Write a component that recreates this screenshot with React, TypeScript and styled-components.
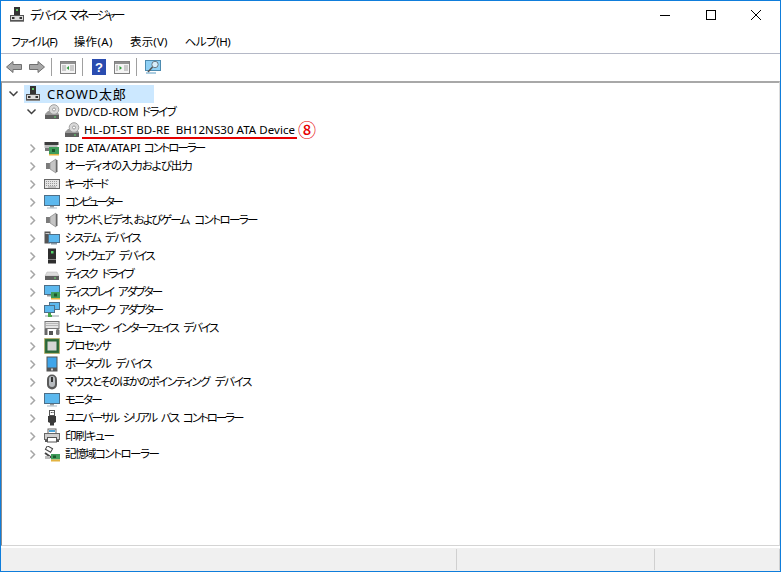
import React from "react";
import styled, { createGlobalStyle } from "styled-components";

const GlobalStyle = createGlobalStyle`
	html, body { margin: 0; padding: 0; background: #fff; }
	body {
		font-family: "Noto Sans", "Noto Sans CJK JP", sans-serif;
		font-size: 12px;
		color: #000;
		font-feature-settings: "palt" 1;
	}
`;

const Win = styled.div`
	width: 781px;
	height: 572px;
	box-sizing: border-box;
	border: 1px solid #0f7ddb;
	display: flex;
	flex-direction: column;
	overflow: hidden;
`;

const TitleBar = styled.div`
	height: 29px;
	display: flex;
	align-items: center;
	flex-shrink: 0;
	padding-right: 1px;
	margin-top: -1px;
`;

const TitleIcon = styled.div`
	width: 16px;
	height: 16px;
	margin-left: 8px;
	margin-right: 5px;
`;

const TitleText = styled.span`
	font-size: 12px;
	flex: 1;
	letter-spacing: -2.1px;
	word-spacing: 3px;
`;

const WinButton = styled.div`
	width: 45.5px;
	height: 29px;
	display: flex;
	align-items: center;
	justify-content: center;
`;

const MenuBar = styled.div`
	height: 25px;
	box-sizing: border-box;
	display: flex;
	align-items: center;
	gap: 17px;
	padding: 0 0 1px 10px;
	border-bottom: 1px solid #b4b8c6;
	flex-shrink: 0;
`;

const MenuItem = styled.span<{ $track: number }>`
	font-size: 11.5px;
	letter-spacing: ${(p) => p.$track}px;
`;

const ToolBar = styled.div`
	height: 27px;
	display: flex;
	align-items: center;
	padding-left: 4px;
	flex-shrink: 0;
	box-sizing: border-box;
	padding-bottom: 1px;
`;

const ToolIcon = styled.div`
	width: 18px;
	height: 18px;
	margin-right: 5px;
	display: flex;
	align-items: center;
	justify-content: center;
`;

const ToolSep = styled.div`
	width: 1px;
	height: 18px;
	background: #a0a0a0;
	margin-right: 7px;
`;

const TreePane = styled.div`
	flex: 1;
	border-top: 2px solid #a8a8a8;
	border-left: 1px solid #8c8c8c;
	border-right: 1px solid #dcdcdc;
	border-bottom: 1px solid #d4d4d4;
	padding-top: 2px;
	background: #fff;
`;

const Row = styled.div<{ $pad: number }>`
	height: 18px;
	display: flex;
	align-items: center;
	padding-left: ${(p) => p.$pad}px;
`;

const Arrow = styled.div`
	width: 15px;
	height: 18px;
	display: flex;
	align-items: center;
	justify-content: center;
	margin-right: 5px;
`;

const RootArrow = styled(Arrow)`
	margin-right: 3px;
`;

const ItemIcon = styled.div`
	width: 16px;
	height: 16px;
	margin-right: 5px;
	flex-shrink: 0;
`;

const Label = styled.span`
	font-size: 11.5px;
	white-space: pre;
	line-height: 18px;
`;

const Kana = styled.span<{ $track: number }>`
	letter-spacing: ${(p) => p.$track}px;
	word-spacing: 4px;
`;

const RootHighlight = styled.div`
	display: flex;
	align-items: center;
	background: #cce8ff;
	height: 18px;
	width: 130px;
	padding-left: 1px;
	box-sizing: border-box;
`;

const RootLabel = styled.span`
	font-size: 13px;
	line-height: 18px;
	letter-spacing: 0.8px;
	margin-left: 1px;
	white-space: nowrap;
`;

const DeviceWrap = styled.span`
	position: relative;
	display: inline-block;
	margin-left: -1px;
	height: 18px;
	letter-spacing: 0.06px;
`;

const Underline = styled.div`
	position: absolute;
	left: -2px;
	top: 16px;
	width: 215px;
	height: 2px;
	background: #e60000;
`;

const Badge = styled.span`
	position: absolute;
	left: 214px;
	top: -1px;
	font-size: 18px;
	line-height: 18px;
	color: #e60000;
	font-weight: 500;
	font-family: "Noto Sans CJK JP", sans-serif;
`;

const StatusBar = styled.div`
	height: 23px;
	display: flex;
	background: #f0f0f0;
	flex-shrink: 0;
	margin-top: 2px;
`;

const StatusCell = styled.div<{ $w?: number }>`
	width: ${(p) => (p.$w ? `${p.$w}px` : "auto")};
	flex: ${(p) => (p.$w ? "none" : 1)};
	box-sizing: border-box;
	border-right: 1px solid #d0d0d0;
	margin: 1px 0;
`;

const Svg = ({ children, s = 16 }: { children: React.ReactNode; s?: number }) => (
	<svg width={s} height={s} viewBox="0 0 16 16" style={{ display: "block" }}>
		{children}
	</svg>
);

const IcComputerRoot = () => (
	<Svg>
		<rect x="5" y="0" width="6" height="9" fill="#333" />
		<rect x="7" y="2" width="2" height="2" fill="#5fc35f" />
		<rect x="1.5" y="8.5" width="13" height="5" fill="#dcdcdc" stroke="#555" />
		<rect x="3" y="10" width="2.5" height="2" fill="#333" />
		<rect x="10.5" y="10" width="2.5" height="2" fill="#333" />
		<rect x="1" y="14" width="14" height="1" fill="#8c8c8c" />
	</Svg>
);
const IcDisc = () => (
	<Svg>
		<path d="M1 10 L4 7 H12 L15 10 V15 H1Z" fill="#9a9a9a" />
		<rect x="1" y="11" width="14" height="4" fill="#5f5f5f" />
		<circle cx="10" cy="5.5" r="4.8" fill="#d8d8d8" stroke="#a0a0a0" />
		<circle cx="10" cy="5.5" r="1.5" fill="#fff" stroke="#808080" strokeWidth="0.7" />
		<rect x="10" y="12.5" width="2" height="1" fill="#62e070" />
	</Svg>
);
const IcIde = () => (
	<Svg>
		<rect x="0.5" y="2" width="14" height="3" fill="#3c3c3c" />
		<rect x="0.5" y="5" width="13" height="3" fill="#bcbcbc" />
		<rect x="1" y="8" width="5" height="3" fill="#777" />
		<rect x="5" y="7" width="10" height="7" fill="#3f9c5a" />
		<rect x="8" y="9" width="3" height="3" fill="#1d5a2e" />
		<rect x="5" y="14" width="10" height="1.5" fill="#e3b341" />
	</Svg>
);
const IcSpeaker = () => (
	<Svg>
		<rect x="2" y="5" width="5" height="6" fill="#7b7b7b" />
		<path d="M6 5 L12 1 V15 L6 11Z" fill="#c4c4c4" stroke="#8e8e8e" strokeWidth="0.8" />
		<rect x="12" y="2" width="1.5" height="12" fill="#666" />
	</Svg>
);
const IcKeyboard = () => (
	<Svg>
		<rect x="0.5" y="3.5" width="15" height="9" fill="#e4e4e4" stroke="#666" />
		<path d="M2 5.5 H14 M2 7.5 H14 M2 9.5 H14" stroke="#9a9a9a" strokeDasharray="1 1" />
		<rect x="4" y="10.5" width="8" height="1" fill="#9a9a9a" />
	</Svg>
);
const IcMonitor = () => (
	<Svg>
		<rect x="0.5" y="1.5" width="15" height="10" fill="#5cb8ee" stroke="#4d6f88" />
		<rect x="6" y="12" width="4" height="1.5" fill="#9a9a9a" />
		<rect x="3" y="13.5" width="10" height="1" fill="#a8b8c4" />
	</Svg>
);
const IcSystem = () => (
	<Svg>
		<rect x="0.5" y="1.5" width="6" height="12" fill="#555" />
		<rect x="1.5" y="3" width="4" height="1" fill="#ccc" />
		<rect x="4.5" y="4.5" width="11" height="8" fill="#5cb8ee" stroke="#4d6f88" />
		<rect x="7" y="13" width="6" height="1.5" fill="#8a98a4" />
	</Svg>
);
const IcSoftware = () => (
	<Svg>
		<rect x="4" y="0.5" width="8" height="15" fill="#2e2e2e" />
		<rect x="7" y="3" width="2.5" height="2.5" fill="#54d26a" />
		<rect x="4" y="11" width="8" height="1" fill="#888" />
	</Svg>
);
const IcDrive = () => (
	<Svg>
		<path d="M3 6 H13 L15 10 H1Z" fill="#dcdcdc" stroke="#b0b0b0" strokeWidth="0.5" />
		<rect x="1" y="10" width="14" height="4" fill="#5f5f5f" />
		<rect x="10" y="11.5" width="2" height="1" fill="#73e273" />
	</Svg>
);
const IcDisplay = () => (
	<Svg>
		<rect x="0.5" y="1.5" width="15" height="9" fill="#5cb8ee" stroke="#4d6f88" />
		<rect x="3" y="11" width="6" height="1.5" fill="#9a9a9a" />
		<rect x="7" y="8" width="9" height="6" fill="#3f9c5a" />
		<rect x="10" y="9.5" width="3" height="3" fill="#1d5a2e" />
		<rect x="7" y="14" width="9" height="1.5" fill="#e3b341" />
	</Svg>
);
const IcNetwork = () => (
	<Svg>
		<rect x="5.5" y="0.5" width="10" height="7" fill="#5cb8ee" stroke="#4d6f88" />
		<rect x="0.5" y="3.5" width="10" height="7" fill="#5cb8ee" stroke="#4d6f88" />
		<rect x="4" y="11" width="3" height="2" fill="#4aa54a" />
		<rect x="1" y="13" width="14" height="2" fill="#c9cdd0" />
		<rect x="4" y="13" width="4" height="2" fill="#4aa54a" />
	</Svg>
);
const IcHid = () => (
	<Svg>
		<rect x="1" y="1.5" width="14" height="7" fill="#e4e4e4" stroke="#777" />
		<path d="M2.5 3.5 H13.5 M2.5 5.5 H13.5" stroke="#888" strokeDasharray="1 1" />
		<rect x="0.5" y="9" width="3" height="6" fill="#666" />
		<rect x="12" y="9" width="3.5" height="6" rx="1.5" fill="#777" />
		<path d="M5 15 V11 H9 V15Z" fill="#555" />
	</Svg>
);
const IcCpu = () => (
	<Svg>
		<rect x="0.5" y="0.5" width="15" height="15" fill="#3d7a45" stroke="#c8a74a" strokeDasharray="1 1" />
		<rect x="1.5" y="1.5" width="13" height="13" fill="#2a6637" />
		<rect x="3.5" y="3.5" width="9" height="9" fill="#d6d6d6" />
	</Svg>
);
const IcPortable = () => (
	<Svg>
		<rect x="2.5" y="0.5" width="11" height="15" fill="#555" />
		<rect x="3.5" y="1.5" width="9" height="10" fill="#3fa5ea" />
		<rect x="7" y="12.5" width="2" height="2" fill="#ccc" />
	</Svg>
);
const IcMouse = () => (
	<Svg>
		<rect x="3" y="0.5" width="10" height="15" rx="5" fill="#5a5a5a" />
		<rect x="5" y="2" width="6" height="11" rx="3" fill="#b8bcc0" />
		<rect x="7" y="3" width="2" height="5" fill="#333" />
	</Svg>
);
const IcUsb = () => (
	<Svg>
		<rect x="5.5" y="0.5" width="5" height="5" fill="#fff" stroke="#555" />
		<rect x="6.8" y="2" width="1" height="1" fill="#333" />
		<rect x="8.5" y="2" width="1" height="1" fill="#333" />
		<path d="M4 6 H12 V12 L10 13 V15.5 H6 V13 L4 12Z" fill="#3a3a3a" />
	</Svg>
);
const IcPrinter = () => (
	<Svg>
		<rect x="4" y="1" width="8" height="5" fill="#fff" stroke="#666" />
		<rect x="0.5" y="5.5" width="15" height="6" fill="#cfcfcf" stroke="#666" />
		<rect x="5" y="2" width="6" height="2" fill="#4aa3d8" />
		<rect x="3.5" y="9.5" width="9" height="4.5" fill="#fff" stroke="#555" />
		<rect x="1" y="12" width="2" height="2" fill="#555" />
		<rect x="13" y="12" width="2" height="2" fill="#555" />
	</Svg>
);
const IcStorage = () => (
	<Svg>
		<rect x="2" y="1" width="6" height="4" fill="#fff" stroke="#444" transform="rotate(30 5 3)" />
		<path d="M1 7 L8 12" stroke="#444" strokeWidth="2" />
		<rect x="7" y="8" width="9" height="5.5" fill="#3f9c5a" />
		<rect x="9" y="9.5" width="3" height="2.5" fill="#1d5a2e" />
		<rect x="7" y="13.5" width="9" height="2" fill="#e3b341" />
		<rect x="1" y="10" width="5" height="3" fill="#bdbdbd" />
	</Svg>
);

const Chevron = ({ open }: { open: boolean }) =>
	open ? (
		<svg width="11" height="8" viewBox="0 0 11 8">
			<path d="M1.5 1.5 L5.5 5.5 L9.5 1.5" fill="none" stroke="#404040" strokeWidth="1.5" />
		</svg>
	) : (
		<svg width="8" height="11" viewBox="0 0 8 11">
			<path d="M2.5 1.5 L6.5 5.5 L2.5 9.5" fill="none" stroke="#a6a6a6" strokeWidth="1.5" />
		</svg>
	);

type Category = { prefix?: string; name: string; track: number; icon: React.ReactNode };

const categories: Category[] = [
	{ prefix: "IDE ATA/ATAPI ", name: "コントローラー", track: -1.9, icon: <IcIde /> },
	{ name: "オーディオの入力および出力", track: -1.08, icon: <IcSpeaker /> },
	{ name: "キーボード", track: -2.4, icon: <IcKeyboard /> },
	{ name: "コンピューター", track: -2.6, icon: <IcMonitor /> },
	{ name: "サウンド、ビデオ、およびゲーム コントローラー", track: -1.6, icon: <IcSpeaker /> },
	{ name: "システム デバイス", track: -1.73, icon: <IcSystem /> },
	{ name: "ソフトウェア デバイス", track: -1.66, icon: <IcSoftware /> },
	{ name: "ディスク ドライブ", track: -2, icon: <IcDrive /> },
	{ name: "ディスプレイ アダプター", track: -2, icon: <IcDisplay /> },
	{ name: "ネットワーク アダプター", track: -2, icon: <IcNetwork /> },
	{ name: "ヒューマン インターフェイス デバイス", track: -1.85, icon: <IcHid /> },
	{ name: "プロセッサ", track: -1.5, icon: <IcCpu /> },
	{ name: "ポータブル デバイス", track: -1.6, icon: <IcPortable /> },
	{ name: "マウスとそのほかのポインティング デバイス", track: -1.4, icon: <IcMouse /> },
	{ name: "モニター", track: -1.75, icon: <IcMonitor /> },
	{ name: "ユニバーサル シリアル バス コントローラー", track: -2.07, icon: <IcUsb /> },
	{ name: "印刷キュー", track: -1.2, icon: <IcPrinter /> },
	{ name: "記憶域コントローラー", track: -1.5, icon: <IcStorage /> },
];

const menus: [string, number][] = [
	["ファイル(F)", -1],
	["操作(A)", 0.4],
	["表示(V)", 0.2],
	["ヘルプ(H)", -0.5],
];

function App() {
	return (
		<Win>
			<GlobalStyle />
			<TitleBar>
				<TitleIcon>
					<IcComputerRoot />
				</TitleIcon>
				<TitleText>デバイス マネージャー</TitleText>
				<WinButton>
					<svg width="10" height="10"><path d="M0 5.5 H10" stroke="#000" /></svg>
				</WinButton>
				<WinButton>
					<svg width="10" height="10"><rect x="0.5" y="0.5" width="9" height="9" fill="none" stroke="#000" /></svg>
				</WinButton>
				<WinButton>
					<svg width="10" height="10"><path d="M0 0 L10 10 M10 0 L0 10" stroke="#000" /></svg>
				</WinButton>
			</TitleBar>
			<MenuBar>
				{menus.map(([m, t]) => (
					<MenuItem key={m} $track={t}>{m}</MenuItem>
				))}
			</MenuBar>
			<ToolBar>
				<ToolIcon>
					<svg width="16" height="12" viewBox="0 0 16 12"><path d="M0.5 6 L7 0.5 V3.5 H15.5 V8.5 H7 V11.5Z" fill="#a8a8a8" stroke="#707070" /></svg>
				</ToolIcon>
				<ToolIcon>
					<svg width="16" height="12" viewBox="0 0 16 12"><path d="M15.5 6 L9 0.5 V3.5 H0.5 V8.5 H9 V11.5Z" fill="#a8a8a8" stroke="#707070" /></svg>
				</ToolIcon>
				<ToolSep />
				<ToolIcon>
					<Svg>
						<rect x="0.5" y="2.5" width="15" height="12" fill="#f4f4f4" stroke="#808080" />
						<rect x="1" y="3" width="14" height="2" fill="#909090" />
						<path d="M2 7 H6 M2 9 H6 M2 11 H6 M10 7 H14 M10 9 H14 M10 11 H14" stroke="#a0a0a0" />
						<path d="M9 7 L6.5 9 L9 11Z" fill="#2d9c3a" />
					</Svg>
				</ToolIcon>
				<ToolSep />
				<ToolIcon>
					<svg width="14" height="16" viewBox="0 0 14 16">
						<rect width="14" height="16" fill="#2a4cb0" />
						<text x="7" y="13" textAnchor="middle" fontSize="13" fontWeight="700" fill="#fff" fontFamily="Liberation Sans">?</text>
					</svg>
				</ToolIcon>
				<ToolIcon>
					<Svg>
						<rect x="0.5" y="2.5" width="15" height="12" fill="#f4f4f4" stroke="#808080" />
						<rect x="1" y="3" width="14" height="2" fill="#909090" />
						<path d="M2 7 H4 M2 9 H4 M2 11 H4 M10 7 H14 M10 9 H14 M10 11 H14" stroke="#a0a0a0" />
						<path d="M5.5 7 L8 9 L5.5 11Z" fill="#2d9c3a" />
					</Svg>
				</ToolIcon>
				<ToolSep />
				<ToolIcon>
					<Svg>
						<rect x="0.5" y="1.5" width="15" height="10" fill="#8fd0f5" stroke="#4d8bb0" />
						<circle cx="10" cy="5.5" r="3.2" fill="#d8eefb" stroke="#6a7a86" />
						<path d="M7.5 8 L3 13" stroke="#555" strokeWidth="1.5" />
						<rect x="1" y="13.5" width="10" height="1" fill="#5a9cc4" />
					</Svg>
				</ToolIcon>
			</ToolBar>
			<TreePane>
				<Row $pad={4}>
					<RootArrow><Chevron open /></RootArrow>
					<RootHighlight>
						<ItemIcon><IcComputerRoot /></ItemIcon>
						<RootLabel>CROWD太郎</RootLabel>
					</RootHighlight>
				</Row>
				<Row $pad={22}>
					<Arrow><Chevron open /></Arrow>
					<ItemIcon><IcDisc /></ItemIcon>
					<Label>DVD/CD-ROM <Kana $track={-1.4}>ドライブ</Kana></Label>
				</Row>
				<Row $pad={42}>
					<Arrow />
					<ItemIcon><IcDisc /></ItemIcon>
					<DeviceWrap>
						<Label>HL-DT-ST BD-RE  BH12NS30 ATA Device</Label>
						<Underline />
						<Badge>⑧</Badge>
					</DeviceWrap>
				</Row>
				{categories.map((c) => (
					<Row $pad={22} key={c.name + c.track}>
						<Arrow><Chevron open={false} /></Arrow>
						<ItemIcon>{c.icon}</ItemIcon>
						<Label>{c.prefix}<Kana $track={c.track}>{c.name}</Kana></Label>
					</Row>
				))}
			</TreePane>
			<StatusBar>
				<StatusCell />
				<StatusCell $w={198} />
				<StatusCell $w={125} />
			</StatusBar>
		</Win>
	);
}

export default App;
